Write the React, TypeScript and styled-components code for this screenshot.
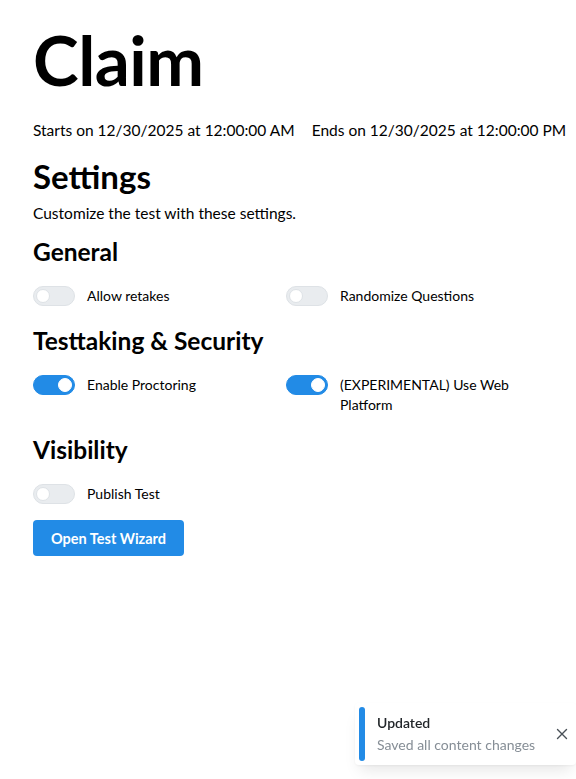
import React, { useState } from "react";
import styled, { createGlobalStyle } from "styled-components";

const GlobalStyle = createGlobalStyle`
   html, body {
      margin: 0;
      padding: 0;
      background: #ffffff;
      font-family: "Lato", "Noto Sans", sans-serif;
      color: #000000;
   }
   * {
      box-sizing: border-box;
   }
`;

type Setting = {
   id: string;
   label: string;
   on: boolean;
};

const sections: { title: string; items: Setting[] }[] = [
   {
      title: "General",
      items: [
         { id: "retakes", label: "Allow retakes", on: false },
         { id: "randomize", label: "Randomize Questions", on: false },
      ],
   },
   {
      title: "Testtaking & Security",
      items: [
         { id: "proctor", label: "Enable Proctoring", on: true },
         { id: "web", label: "(EXPERIMENTAL) Use Web Platform", on: true },
      ],
   },
   {
      title: "Visibility",
      items: [{ id: "publish", label: "Publish Test", on: false }],
   },
];

function App() {
   const [values, setValues] = useState<Record<string, boolean>>(() => {
      const v: Record<string, boolean> = {};
      sections.forEach((s) => s.items.forEach((i) => (v[i.id] = i.on)));
      return v;
   });
   const [toastOpen, setToastOpen] = useState(true);

   return (
      <>
         <GlobalStyle />
         <Page>
            <Title>Claim</Title>
            <Dates>
               <span>Starts on 12/30/2025 at 12:00:00 AM</span>
               <span>Ends on 12/30/2025 at 12:00:00 PM</span>
            </Dates>
            <SettingsTitle>Settings</SettingsTitle>
            <Subtitle>Customize the test with these settings.</Subtitle>

            {sections.map((section) => (
               <Section key={section.title}>
                  <SectionTitle>{section.title}</SectionTitle>
                  <Grid>
                     {section.items.map((item) => (
                        <SwitchRow key={item.id}>
                           <Track
                              $on={values[item.id]}
                              onClick={() =>
                                 setValues({ ...values, [item.id]: !values[item.id] })
                              }
                           >
                              <Thumb $on={values[item.id]} />
                           </Track>
                           <SwitchLabel>{item.label}</SwitchLabel>
                        </SwitchRow>
                     ))}
                  </Grid>
               </Section>
            ))}

            <WizardButton>Open Test Wizard</WizardButton>
         </Page>

         {toastOpen && (
            <Toast>
               <ToastBar />
               <ToastBody>
                  <ToastTitle>Updated</ToastTitle>
                  <ToastText>Saved all content changes</ToastText>
               </ToastBody>
               <CloseButton onClick={() => setToastOpen(false)}>
                  <svg width="16" height="16" viewBox="0 0 16 16" fill="none">
                     <path
                        d="M3.5 3.5l9 9M12.5 3.5l-9 9"
                        stroke="#495057"
                        strokeWidth="1.4"
                        strokeLinecap="round"
                     />
                  </svg>
               </CloseButton>
            </Toast>
         )}
      </>
   );
}

export default App;

const Page = styled.div`
   padding: 20px 33px 24px;
   display: flex;
   flex-direction: column;
   align-items: flex-start;
`;

const Title = styled.h1`
   margin: 0;
   font-size: 69px;
   font-weight: 700;
   line-height: 80px;
   letter-spacing: -0.5px;
`;

const Dates = styled.div`
   margin-top: 19px;
   display: flex;
   gap: 17px;
   font-size: 15.5px;
   line-height: 22px;
   white-space: nowrap;
`;

const SettingsTitle = styled.h2`
   margin: 15px 0 0;
   font-size: 33px;
   font-weight: 700;
   line-height: 40px;
`;

const Subtitle = styled.p`
   margin: 6px 0 0;
   font-size: 15.5px;
   line-height: 22px;
`;

const Section = styled.div`
   width: 100%;
   margin-top: 12px;
   padding-bottom: 7px;
`;

const SectionTitle = styled.h3`
   margin: 0 0 18px;
   font-size: 24.5px;
   font-weight: 700;
   line-height: 32px;
`;

const Grid = styled.div`
   display: grid;
   grid-template-columns: 1fr 1fr;
   width: 506px;
`;

const SwitchRow = styled.div`
   display: flex;
   align-items: flex-start;
   gap: 12px;
   padding-right: 16px;
`;

const Track = styled.div<{ $on: boolean }>`
   flex: none;
   position: relative;
   width: 42px;
   height: 20px;
   border-radius: 10px;
   background: ${({ $on }) => ($on ? "#228be6" : "#e9ecef")};
   border: 1px solid ${({ $on }) => ($on ? "#228be6" : "#dee2e6")};
   cursor: pointer;
`;

const Thumb = styled.div<{ $on: boolean }>`
   position: absolute;
   top: 2px;
   left: ${({ $on }) => ($on ? "24px" : "2px")};
   width: 14px;
   height: 14px;
   border-radius: 50%;
   background: #ffffff;
   border: 1px solid ${({ $on }) => ($on ? "#ffffff" : "#dee2e6")};
`;

const SwitchLabel = styled.span`
   font-size: 14px;
   line-height: 20px;
`;

const WizardButton = styled.button`
   margin-top: 9px;
   height: 36px;
   padding: 0 18px;
   border: none;
   border-radius: 4px;
   background: #228be6;
   color: #ffffff;
   font-family: inherit;
   font-size: 14.5px;
   font-weight: 700;
   cursor: pointer;
`;

const Toast = styled.div`
   position: fixed;
   right: 0;
   bottom: 14px;
   width: 221px;
   height: 62px;
   display: flex;
   align-items: center;
   padding: 4px 6px 4px 4px;
   background: #ffffff;
   border-radius: 4px;
   box-shadow: 0 1px 3px rgba(0, 0, 0, 0.05), 0 10px 15px -5px rgba(0, 0, 0, 0.1);
`;

const ToastBar = styled.div`
   align-self: stretch;
   width: 6px;
   border-radius: 3px;
   background: #228be6;
`;

const ToastBody = styled.div`
   flex: 1;
   padding-left: 12px;
`;

const ToastTitle = styled.div`
   font-size: 14px;
   font-weight: 600;
   line-height: 22px;
   color: #212529;
`;

const ToastText = styled.div`
   font-size: 14px;
   line-height: 22px;
   color: #868e96;
   white-space: nowrap;
`;

const CloseButton = styled.button`
   border: none;
   background: none;
   padding: 0;
   display: flex;
   cursor: pointer;
`;
